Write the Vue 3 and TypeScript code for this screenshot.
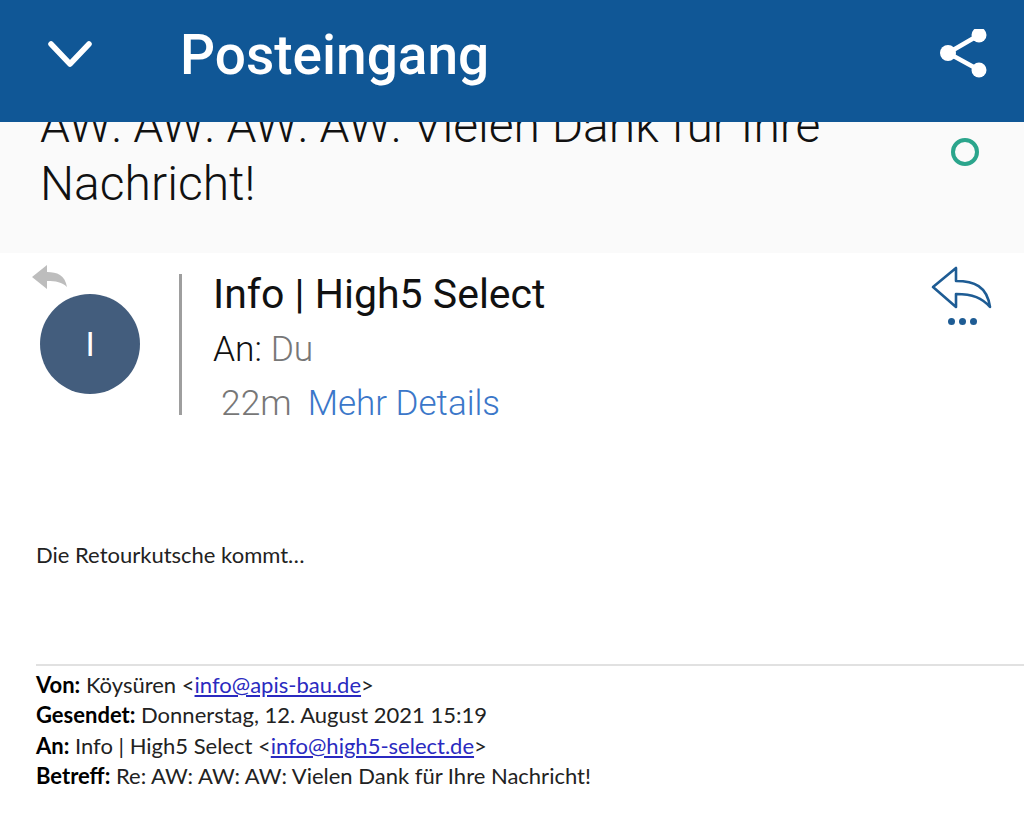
<script setup lang="ts">
const subject = "AW: AW: AW: AW: Vielen Dank für Ihre Nachricht!";

const meta = [
  { label: "Von:", before: " Köysüren <", link: "info@apis-bau.de", after: ">" },
  { label: "Gesendet:", before: " Donnerstag, 12. August 2021 15:19", link: "", after: "" },
  { label: "An:", before: " Info | High5 Select <", link: "info@high5-select.de", after: ">" },
  { label: "Betreff:", before: " Re: AW: AW: AW: Vielen Dank für Ihre Nachricht!", link: "", after: "" },
];
</script>

<template>
  <div class="screen">
    <header class="topbar">
      <svg class="chevron" width="46" height="28" viewBox="0 0 46 28" aria-hidden="true">
        <path d="M3 3 L22 23 L41 3" fill="none" stroke="#fff" stroke-width="5.5" stroke-linecap="round" stroke-linejoin="round" />
      </svg>
      <h1 class="title">Posteingang</h1>
      <svg class="share" width="48" height="52" viewBox="0 0 48 52" aria-hidden="true">
        <path d="M8 24 L39 6 M8 24 L39 41" fill="none" stroke="#fff" stroke-width="4.5" />
        <circle cx="39" cy="6" r="7.5" fill="#fff" />
        <circle cx="8" cy="24" r="8" fill="#fff" />
        <circle cx="39" cy="41" r="7.5" fill="#fff" />
      </svg>
    </header>

    <section class="subject-band">
      <p class="subject">{{ subject }}</p>
      <span class="unread"></span>
    </section>

    <section class="sender">
      <div class="avatar-col">
        <svg class="replied" width="36" height="26" viewBox="0 0 36 26" aria-hidden="true">
          <path d="M0 13 L15 1 V8 C25 8 33 11 35 23 C30 18 24 17 15 17 V25 Z" fill="#bdbdbd" />
        </svg>
        <div class="avatar">I</div>
      </div>
      <div class="info">
        <div class="name">Info | High5 Select</div>
        <div class="to"><span>An:</span> <span class="muted">Du</span></div>
        <div class="when"><span class="muted">22m</span><a class="details">Mehr Details</a></div>
      </div>
      <div class="reply">
        <svg width="62" height="44" viewBox="0 0 62 44" aria-hidden="true">
          <path d="M2 21 L25 2 V15 C43 15 56 20 59 41 C51 32 42 28 25 28 V41 Z" fill="none" stroke="#1e5c94" stroke-width="2.6" stroke-linejoin="round" />
        </svg>
        <div class="dots"><i></i><i></i><i></i></div>
      </div>
    </section>

    <main class="body">
      <p class="lead">Die Retourkutsche kommt…</p>
      <div class="quoted">
        <p v-for="row in meta" :key="row.label">
          <b>{{ row.label }}</b>{{ row.before }}<a v-if="row.link" class="mail">{{ row.link }}</a>{{ row.after }}
        </p>
      </div>
    </main>
  </div>
</template>

<style>
html, body {
  margin: 0;
  background: #fff;
}
</style>

<style scoped>
.screen {
  width: 1024px;
  height: 815px;
  overflow: hidden;
  font-family: Roboto, "Liberation Sans", sans-serif;
  background: #fff;
}

.topbar {
  height: 122px;
  box-sizing: border-box;
  padding: 0 36px 12px 48px;
  display: flex;
  align-items: center;
  background: #105796;
  color: #fff;
}

.chevron {
  flex: none;
}

.title {
  margin: 0 0 0 86px;
  flex: 1;
  font-size: 55px;
  font-weight: 500;
  line-height: 60px;
}

.share {
  flex: none;
}

.subject-band {
  height: 131px;
  overflow: hidden;
  display: flex;
  background: #fafafa;
}

.subject {
  margin: -25px 0 0 40px;
  width: 861px;
  font-size: 48px;
  font-weight: 300;
  line-height: 58px;
  color: #111;
}

.unread {
  margin: 16px 0 0 50px;
  width: 28px;
  height: 28px;
  box-sizing: border-box;
  border: 4px solid #2ba58c;
  border-radius: 50%;
}

.sender {
  height: 162px;
  padding-top: 21px;
  box-sizing: border-box;
  display: flex;
}

.avatar-col {
  width: 179px;
  margin-top: -10px;
  padding-left: 32px;
  box-sizing: border-box;
  flex: none;
}

.replied {
  display: block;
}

.avatar {
  width: 100px;
  height: 100px;
  margin: 4px 0 0 8px;
  border-radius: 50%;
  background: #435d7d;
  color: #fff;
  font-size: 34px;
  line-height: 100px;
  text-align: center;
}

.info {
  flex: 1;
  height: 141px;
  border-left: 3px solid #9e9e9e;
  padding-left: 31px;
  box-sizing: border-box;
}

.name {
  font-size: 41px;
  line-height: 40px;
  color: #111;
}

.to {
  margin-top: 15px;
  font-size: 35.4px;
  font-weight: 300;
  line-height: 40px;
  color: #111;
}

.when {
  margin-top: 14px;
  padding-left: 8px;
  font-size: 35.4px;
  font-weight: 300;
  line-height: 40px;
}

.muted {
  color: #777;
}

.details {
  margin-left: 16px;
  color: #3b77c9;
  font-size: 35px;
}

.reply {
  width: 93px;
  margin-top: -8px;
  flex: none;
}

.reply svg {
  display: block;
}

.dots {
  margin: 8px 0 0 17px;
  display: flex;
  gap: 4px;
}

.dots i {
  width: 7px;
  height: 7px;
  border-radius: 50%;
  background: #1e5c94;
}

.body {
  padding-left: 36px;
  font-family: Lato, "Open Sans", sans-serif;
  font-size: 22px;
  color: #222;
}

.lead {
  margin: 0;
  padding-top: 125px;
  line-height: 30px;
}

.quoted {
  margin-top: 94px;
  padding-top: 4px;
  border-top: 2px solid #e1e1e1;
}

.quoted p {
  margin: 0;
  line-height: 30.3px;
  white-space: pre;
}

.quoted b {
  color: #000;
}

.mail {
  color: #2a2ac0;
  text-decoration: underline;
}
</style>
